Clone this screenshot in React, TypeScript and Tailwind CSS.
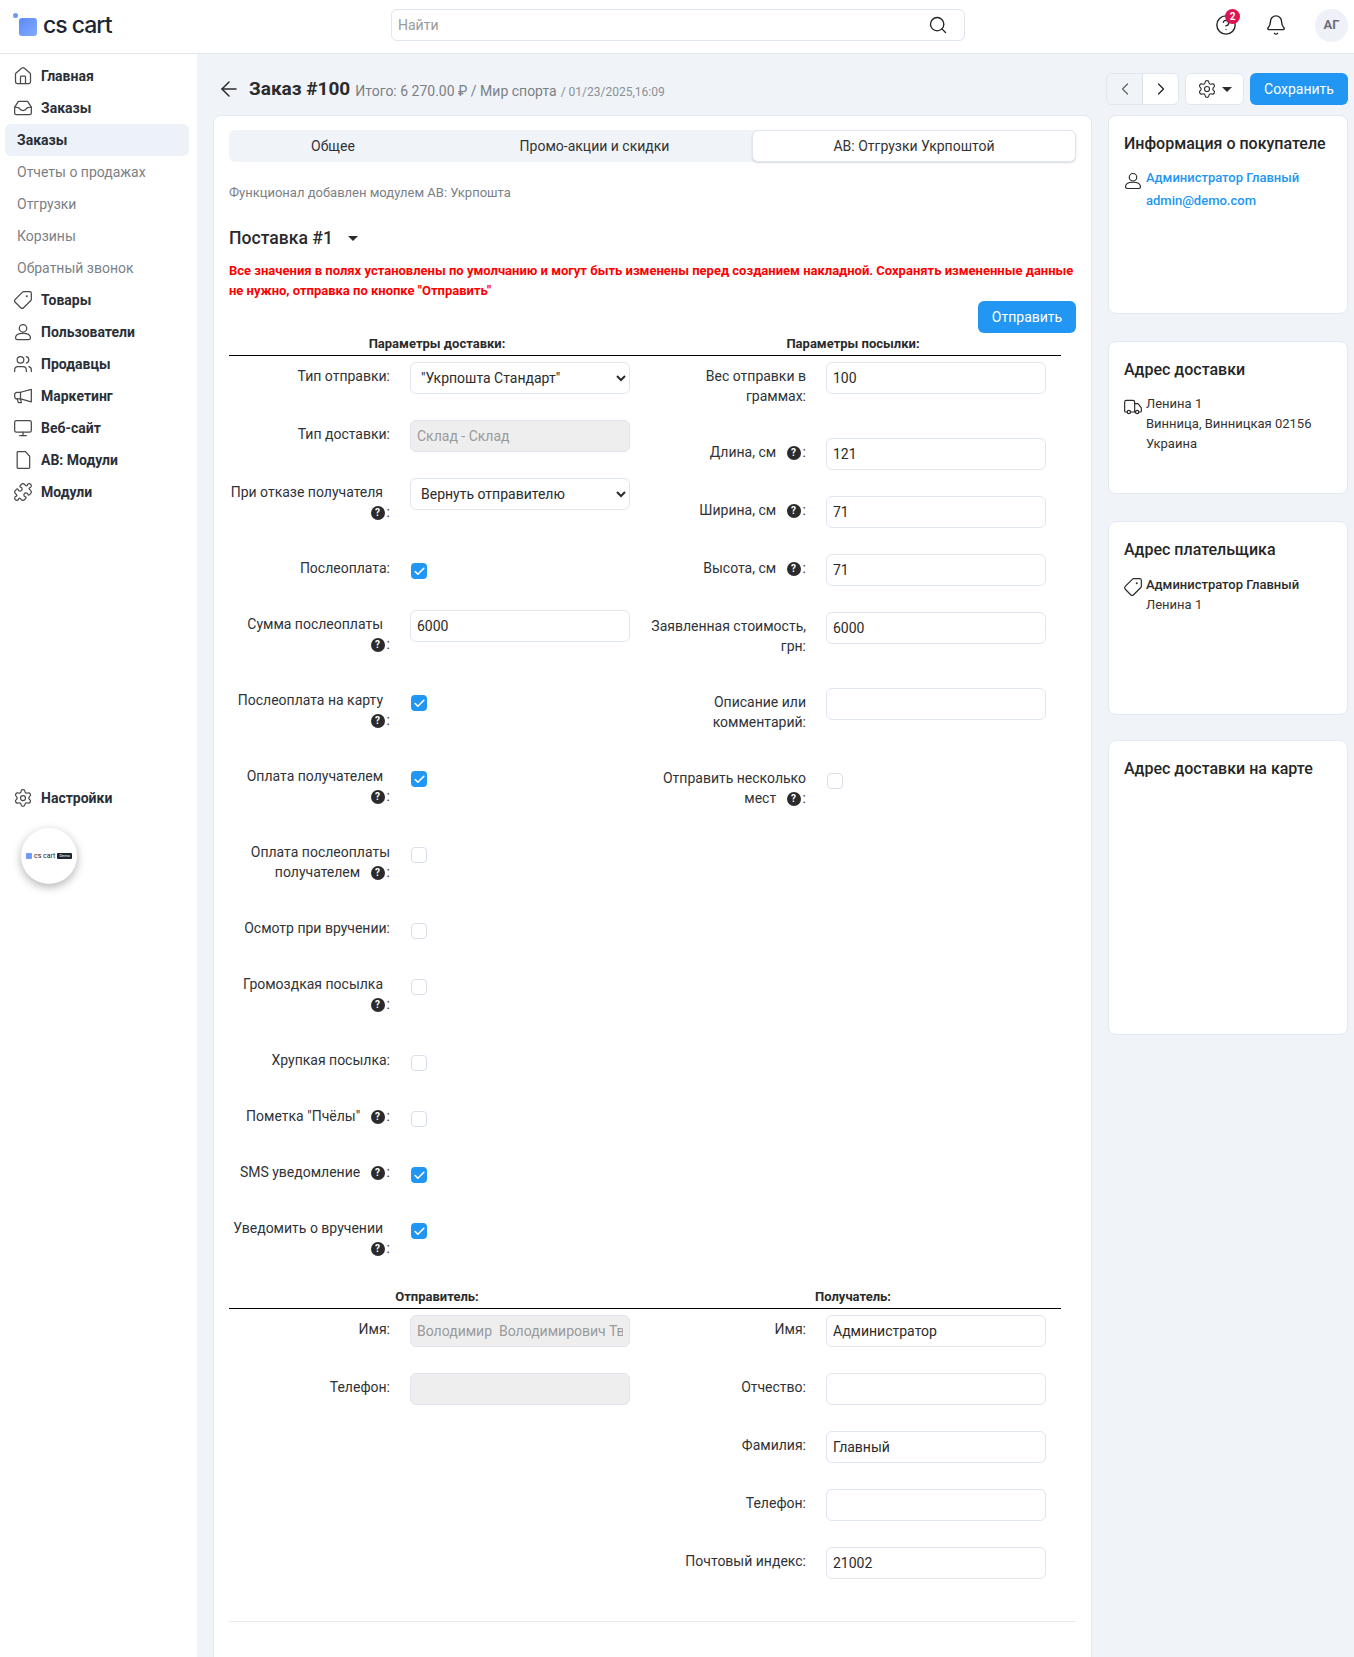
import React from "react";
import { House, Users, Monitor, Puzzle, Settings, Search, Bell, CircleHelp, ArrowLeft, ChevronLeft, ChevronRight, Truck, Tag, Check } from "lucide-react";

const InboxIcon = (p: any) => (
  <svg viewBox="0 0 24 24" fill="none" stroke="currentColor" strokeLinecap="round" strokeLinejoin="round" width={p.size} height={p.size} strokeWidth={p.strokeWidth} className={p.className}>
    <path d="M6.5 4h11L22 11v7a2 2 0 0 1-2 2H4a2 2 0 0 1-2-2v-7z" />
    <path d="M2 11c3.5 0 4.5 0 5.5 1.5S9.5 15 12 15s3.500-1 4.500-2.500S18.500 11 22 11" />
  </svg>
);
const UserIcon = (p: any) => (
  <svg viewBox="0 0 24 24" fill="none" stroke="currentColor" strokeLinecap="round" strokeLinejoin="round" width={p.size} height={p.size} strokeWidth={p.strokeWidth} className={p.className}>
    <circle cx="12" cy="7.500" r="4.500" />
    <path d="M3 19c0-3.500 3.500-5.500 9-5.500s9 2 9 5.500c0 1.200-.8 2-2 2H5c-1.200 0-2-.8-2-2z" />
  </svg>
);
const MegaphoneIcon = (p: any) => (
  <svg viewBox="0 0 24 24" fill="none" stroke="currentColor" strokeLinecap="round" strokeLinejoin="round" width={p.size} height={p.size} strokeWidth={p.strokeWidth} className={p.className}>
    <path d="M22 4v15L9 15.500H5a3 3 0 0 1-3-3V10.500a3 3 0 0 1 3-3h4z" />
    <path d="M9 7.500v8" />
    <path d="M5 15.500l1.500 4.500h3.500l-1-4.500" />
  </svg>
);
const FileIcon = (p: any) => (
  <svg viewBox="0 0 24 24" fill="none" stroke="currentColor" strokeLinecap="round" strokeLinejoin="round" width={p.size} height={p.size} strokeWidth={p.strokeWidth} className={p.className}>
    <path d="M6 2h9l5 5.500V21a1 1 0 0 1-1 1H6a1 1 0 0 1-1-1V3a1 1 0 0 1 1-1z" />
  </svg>
);
const TagFlip = (p: any) => <Tag size={p.size} strokeWidth={p.strokeWidth} className={`-scale-x-100 ${p.className || ""}`} />;

const Help = () => (
  <span className="inline-flex w-[14px] h-[14px] mr-[2px] rounded-full bg-[#2b2b2b] text-white text-[10px] font-bold items-center justify-center align-[1px] leading-none">?</span>
);

const Caret = ({ cls = "" }: { cls?: string }) => (
  <span className={`inline-block w-0 h-0 border-l-[5px] border-r-[5px] border-t-[5px] border-l-transparent border-r-transparent border-t-[#2b2b2b] ${cls}`} />
);

const NavMain = ({ icon: I, label }: { icon: any; label: string }) => (
  <div className="h-8 flex items-center pl-[13px] gap-[8px] text-[14px] font-bold text-[#2a2f37]">
    <I size={20} strokeWidth={1.5} className="text-[#4a4a4a]" />
    <span>{label}</span>
  </div>
);

const NavSub = ({ label, active }: { label: string; active?: boolean }) => (
  <div className={`h-8 flex items-center pl-[12px] ml-[5px] w-[184px] rounded-md text-[14px] ${active ? "bg-[#edf2f9] font-bold text-[#2a2f37]" : "text-[#7b7f86]"}`}>{label}</div>
);

const Chk = ({ on }: { on?: boolean }) => (
  <div className={`w-4 h-4 rounded-[4px] flex items-center justify-center mt-[9px] ml-px ${on ? "bg-[#2196f3]" : "bg-white border border-[#d9dfea]"}`}>
    {on && <Check size={13} strokeWidth={3} className="text-white" />}
  </div>
);

const inputCls = "w-[220px] h-8 border border-[#dfe5f1] rounded-md px-[6px] text-[14px] text-[#2b2b2b] outline-none";

const Row = ({ label, help, h = 58, children }: { label: React.ReactNode; help?: boolean; h?: number; children: React.ReactNode }) => (
  <div className="flex gap-5" style={{ height: h }}>
    <div className="w-[161px] shrink-0 text-right text-[14px] leading-5 pt-1 text-[#2f3338]">
      {label}{help ? <>{"\u00a0\u00a0"} <Help /></> : null}:
    </div>
    <div>{children}</div>
  </div>
);

const Inp = ({ v = "", dis }: { v?: string; dis?: boolean }) => (
  <input readOnly value={v} className={`${inputCls} block ${dis ? "bg-[#eeeeee] text-[#9a9a9a]" : "bg-white"}`} />
);

const Sel = ({ v }: { v: string }) => (
  <select defaultValue={v} className="w-[220px] h-8 border border-[#dfe5f1] rounded-md pl-[6px] text-[14px] text-[#2b2b2b] bg-white block">
    <option>{v}</option>
  </select>
);

const Head = ({ t }: { t: string }) => (
  <div className="h-[20px] text-center text-[13px] font-bold text-[#2b2b2b] leading-5">{t}</div>
);

const Card = ({ title, h, children }: { title: string; h: number; children?: React.ReactNode }) => (
  <div className="bg-white border border-[#e3e9f4] rounded-lg px-[15px] pt-[16px] w-[240px]" style={{ height: h }}>
    <div className="text-[16px] font-medium text-[#262626] leading-6 mb-[9px]">{title}</div>
    {children}
  </div>
);

export default function App() {
  return (
    <div className="w-[1354px] h-[1657px] overflow-hidden bg-[#f0f4f9] font-['Roboto',sans-serif] text-[#2b2b2b]">
      <header className="h-[54px] bg-white border-b border-[#e1e7f1] flex items-center">
        <div className="w-[391px] shrink-0 pl-[13px] flex items-center h-full">
          <div className="relative w-[24px] h-[24px] mr-[6px] -mt-[4px]">
            <span className="absolute left-0 top-0 w-[5px] h-[5px] rounded-full bg-[#6b97fa]" />
            <span className="absolute left-[6px] top-[5px] w-[18px] h-[18px] rounded-[3px] bg-gradient-to-br from-[#5b8bfb] to-[#84a9fb]" />
          </div>
          <span className="text-[23px] font-['Inter',sans-serif] font-medium tracking-[-1px] text-[#1d2433] leading-none -mt-[2px]">cs cart</span>
        </div>
        <div className="w-[574px] h-8 border border-[#dfe5f1] rounded-md flex items-center px-[6px] justify-between text-[14px] text-[#9a9a9a] -mt-[3px]">
          <span>Найти</span>
          <Search size={20} strokeWidth={1.6} className="text-[#222] mr-[10px]" />
        </div>
        <div className="ml-auto flex items-center pr-[6px] -mt-[3px]">
          <div className="relative mr-[28px]">
            <CircleHelp size={22} strokeWidth={1.5} className="text-[#222]" />
            <span className="absolute -top-[5px] left-[10px] w-[15px] h-[15px] rounded-full bg-[#e0124f] text-white text-[10px] font-bold flex items-center justify-center">2</span>
          </div>
          <Bell size={22} strokeWidth={1.5} className="text-[#222] mr-[28px]" />
          <div className="w-[33px] h-[33px] rounded-full bg-[#eef2f8] text-[#6b7078] text-[13px] font-bold flex items-center justify-center">АГ</div>
        </div>
      </header>

      <div className="flex">
        <aside className="w-[197px] h-[1603px] bg-white shrink-0 pt-[6px]">
          <NavMain icon={House} label="Главная" />
          <NavMain icon={InboxIcon} label="Заказы" />
          <NavSub label="Заказы" active />
          <NavSub label="Отчеты о продажах" />
          <NavSub label="Отгрузки" />
          <NavSub label="Корзины" />
          <NavSub label="Обратный звонок" />
          <NavMain icon={TagFlip} label="Товары" />
          <NavMain icon={UserIcon} label="Пользователи" />
          <NavMain icon={Users} label="Продавцы" />
          <NavMain icon={MegaphoneIcon} label="Маркетинг" />
          <NavMain icon={Monitor} label="Веб-сайт" />
          <NavMain icon={FileIcon} label="АВ: Модули" />
          <NavMain icon={Puzzle} label="Модули" />
          <div className="mt-[274px]">
            <NavMain icon={Settings} label="Настройки" />
          </div>
          <div className="ml-[21px] mt-[14px] w-[56px] h-[56px] rounded-full bg-white shadow-[0_3px_10px_rgba(0,0,0,0.3)] flex items-center justify-center gap-[2px]">
            <span className="w-[6px] h-[6px] bg-[#6f9bfb] rounded-[1px]" />
            <span className="text-[7px] leading-none text-[#1d2433]">cs cart</span>
            <span className="bg-[#1d2433] text-white text-[4px] leading-none px-[2px] py-[1px] rounded-[1px]">Demo</span>
          </div>
        </aside>

        <main className="pl-[16px] pr-[6px] pt-[19px] flex-1">
          <div className="h-8 flex items-center">
            <ArrowLeft size={24} strokeWidth={1.5} className="ml-[4px] mr-[8px] text-[#2b2b2b]" />
            <span className="text-[19px] font-bold text-[#2b2b2b]">Заказ #100</span>
            <span className="text-[14px] text-[#7b7f86] ml-[5px] mt-[4px]">Итого: 6 270.00 ₽ / Мир спорта</span>
            <span className="text-[12px] text-[#8b8f96] ml-[4px] mt-[5px]">/ 01/23/2025,16:09</span>
            <div className="ml-auto flex items-center">
              <div className="flex h-8 w-[73px] border border-[#e1e7f1] rounded-md overflow-hidden">
                <div className="w-[36px] bg-[#f0f4f9] border-r border-[#dbe2ee] flex items-center justify-center"><ChevronLeft size={20} strokeWidth={1.5} className="text-[#666]" /></div>
                <div className="flex-1 bg-white flex items-center justify-center"><ChevronRight size={20} strokeWidth={1.5} className="text-[#222]" /></div>
              </div>
              <div className="w-[59px] h-8 ml-[6px] bg-white border border-[#e1e7f1] rounded-md flex items-center justify-center gap-[5px]">
                <Settings size={20} strokeWidth={1.4} className="text-[#333]" />
                <Caret />
              </div>
              <div className="w-[98px] h-8 ml-[6px] bg-[#2196f3] rounded-md text-white text-[14px] flex items-center justify-center">Сохранить</div>
            </div>
          </div>

          <div className="flex gap-4 mt-[10px]">
            <div className="w-[879px] h-[1600px] shrink-0 bg-white border border-[#e3e9f4] rounded-lg px-[15px] pt-[14px]">
              <div className="flex h-[32px] bg-[#f0f4f9] rounded-md text-[14px] text-[#333] w-[847px]">
                <div className="w-[208px] flex items-center justify-center">Общее</div>
                <div className="w-[315px] flex items-center justify-center">Промо-акции и скидки</div>
                <div className="w-[324px] bg-white border border-[#dfe5f1] rounded-md shadow-[0_1px_2px_rgba(0,0,0,0.15)] flex items-center justify-center">АВ: Отгрузки Укрпоштой</div>
              </div>
              <div className="text-[13px] text-[#7b7f86] mt-[21px] leading-5">Функционал добавлен модулем АВ: Укрпошта</div>
              <div className="text-[17.6px] font-medium text-[#2b2b2b] mt-[23px] leading-6 flex items-center">
                Поставка #1 <Caret cls="ml-[15px]" />
              </div>
              <div className="text-[13px] font-bold text-[#ff0000] leading-5 mt-[11px] w-[847px]">
                Все значения в полях установлены по умолчанию и могут быть изменены перед созданием накладной. Сохранять измененные данные не нужно, отправка по кнопке "Отправить"
              </div>
              <div className="flex justify-end w-[847px]">
                <div className="w-[98px] h-8 bg-[#2196f3] rounded-md text-white text-[14px] flex items-center justify-center">Отправить</div>
              </div>

              <div className="w-[832px] grid grid-cols-2 mt-[1px]">
                <div className="col-span-2 grid grid-cols-2 border-b border-black h-[22px] mb-[6px]">
                  <Head t="Параметры доставки:" />
                  <Head t="Параметры посылки:" />
                </div>
                <div>
                  <Row label="Тип отправки"><Sel v={'"Укрпошта Стандарт"'} /></Row>
                  <Row label="Тип доставки"><Inp v="Склад - Склад" dis /></Row>
                  <Row label="При отказе получателя" help h={76}><Sel v="Вернуть отправителю" /></Row>
                  <Row label="Послеоплата" h={56}><Chk on /></Row>
                  <Row label="Сумма послеоплаты" help h={76}><Inp v="6000" /></Row>
                  <Row label="Послеоплата на карту" help h={76}><Chk on /></Row>
                  <Row label="Оплата получателем" help h={76}><Chk on /></Row>
                  <Row label="Оплата послеоплаты получателем" help h={76}><Chk /></Row>
                  <Row label="Осмотр при вручении" h={56}><Chk /></Row>
                  <Row label="Громоздкая посылка" help h={76}><Chk /></Row>
                  <Row label="Хрупкая посылка" h={56}><Chk /></Row>
                  <Row label={'Пометка "Пчёлы"'} help h={56}><Chk /></Row>
                  <Row label="SMS уведомление" help h={56}><Chk on /></Row>
                  <Row label="Уведомить о вручении" help h={73}><Chk on /></Row>
                </div>
                <div>
                  <Row label="Вес отправки в граммах" h={76}><Inp v="100" /></Row>
                  <Row label="Длина, см" help><Inp v="121" /></Row>
                  <Row label="Ширина, см" help><Inp v="71" /></Row>
                  <Row label="Высота, см" help><Inp v="71" /></Row>
                  <Row label="Заявленная стоимость, грн" h={76}><Inp v="6000" /></Row>
                  <Row label="Описание или комментарий" h={76}><Inp /></Row>
                  <Row label="Отправить несколько мест" help h={76}><Chk /></Row>
                </div>

                <div className="col-span-2 grid grid-cols-2 border-b border-black h-[22px] mb-[6px]">
                  <Head t="Отправитель:" />
                  <Head t="Получатель:" />
                </div>
                <div>
                  <Row label="Имя"><Inp v="Володимир  Володимирович Тв" dis /></Row>
                  <Row label="Телефон"><Inp dis /></Row>
                </div>
                <div>
                  <Row label="Имя"><Inp v="Администратор" /></Row>
                  <Row label="Отчество"><Inp /></Row>
                  <Row label="Фамилия"><Inp v="Главный" /></Row>
                  <Row label="Телефон"><Inp /></Row>
                  <Row label="Почтовый индекс"><Inp v="21002" /></Row>
                </div>
              </div>
              <div className="w-[847px] border-t border-[#e6e9f0] mt-[16px]" />
            </div>

            <div className="w-[240px] shrink-0 flex flex-col">
              <Card title="Информация о покупателе" h={199}>
                <div className="flex gap-[3px] text-[13px] font-medium text-[#2196f3] leading-[23px] pt-px">
                  <UserIcon size={20} strokeWidth={1.4} className="text-[#2b2b2b] mt-[5px] -ml-[1px] shrink-0" />
                  <div>Администратор Главный<br />admin@demo.com</div>
                </div>
              </Card>
              <div className="mt-[27px]">
                <Card title="Адрес доставки" h={153}>
                  <div className="flex gap-[3px] text-[13px] text-[#333] leading-5 pt-[3px]">
                    <Truck size={20} strokeWidth={1.4} className="text-[#2b2b2b] mt-[3px] -ml-[1px] shrink-0" />
                    <div>Ленина 1<br />Винница, Винницкая 02156<br />Украина</div>
                  </div>
                </Card>
              </div>
              <div className="mt-[27px]">
                <Card title="Адрес плательщика" h={194}>
                  <div className="flex gap-[3px] text-[13px] text-[#333] leading-5 pt-[4px]">
                    <TagFlip size={20} strokeWidth={1.4} className="text-[#2b2b2b] mt-[2px] -ml-[1px] shrink-0" />
                    <div><span className="font-medium text-[#2b2b2b]">Администратор Главный</span><br />Ленина 1</div>
                  </div>
                </Card>
              </div>
              <div className="mt-[25px]">
                <Card title="Адрес доставки на карте" h={295} />
              </div>
            </div>
          </div>
        </main>
      </div>
    </div>
  );
}
